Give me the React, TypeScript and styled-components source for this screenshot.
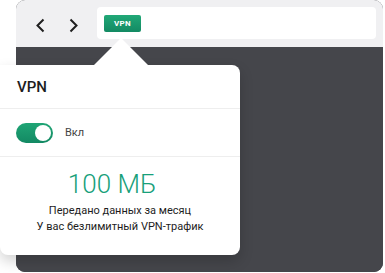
import styled, { createGlobalStyle } from "styled-components";

const GlobalStyle = createGlobalStyle`
  html, body {
    margin: 0;
    padding: 0;
    background: #ffffff;
    font-family: Roboto, "Liberation Sans", Arial, sans-serif;
  }
`;

export default function App() {
  return (
    <>
      <GlobalStyle />
      <Scene>
        <BrowserWindow>
          <Toolbar>
            <NavButton aria-label="back">
              <svg width="11" height="15" viewBox="0 0 11 15">
                <path d="M8.5 1.5 L2.5 7.5 L8.5 13.5" fill="none" stroke="#1f1f1f" strokeWidth="2" />
              </svg>
            </NavButton>
            <NavButton aria-label="forward">
              <svg width="11" height="15" viewBox="0 0 11 15">
                <path d="M2.5 1.5 L8.5 7.5 L2.5 13.5" fill="none" stroke="#1f1f1f" strokeWidth="2" />
              </svg>
            </NavButton>
            <AddressBar>
              <Badge>VPN</Badge>
            </AddressBar>
          </Toolbar>
          <Viewport />
        </BrowserWindow>

        <Popover>
          <Pointer />
          <Title>VPN</Title>
          <Divider />
          <SwitchRow>
            <Switch>
              <Knob />
            </Switch>
            <SwitchLabel>Вкл</SwitchLabel>
          </SwitchRow>
          <Divider />
          <Stats>
            <Amount>100 МБ</Amount>
            <Caption>Передано данных за месяц</Caption>
            <Caption>У вас безлимитный VPN-трафик</Caption>
          </Stats>
        </Popover>
      </Scene>
    </>
  );
}

const Scene = styled.div`
  position: relative;
  width: 385px;
  height: 273px;
  overflow: hidden;
`;

const BrowserWindow = styled.div`
  margin-left: 16px;
  width: 367px;
  height: 272px;
  border-radius: 9px;
  overflow: hidden;
  display: flex;
  flex-direction: column;
  background: #45464b;
`;

const Toolbar = styled.div`
  height: 47px;
  flex-shrink: 0;
  background: #f0f0f2;
  display: flex;
  align-items: center;
  padding: 0 7px 0 14px;
  box-sizing: border-box;
`;

const NavButton = styled.div`
  width: 20px;
  height: 20px;
  display: flex;
  align-items: center;
  justify-content: center;
  margin-right: 13px;
  margin-top: 3px;
`;

const AddressBar = styled.div`
  flex: 1;
  height: 32px;
  margin-left: 1px;
  margin-top: -1px;
  background: #ffffff;
  border-radius: 4px;
  display: flex;
  align-items: center;
  padding-left: 7px;
`;

const Badge = styled.div`
  width: 37px;
  height: 17px;
  border-radius: 2px;
  background: linear-gradient(180deg, #21a877 0%, #138a63 100%);
  color: #ffffff;
  font-size: 8px;
  font-weight: 700;
  letter-spacing: 0.3px;
  display: flex;
  align-items: center;
  justify-content: center;
`;

const Viewport = styled.div`
  flex: 1;
  background: #45464b;
`;

const Popover = styled.div`
  position: absolute;
  left: 0;
  top: 65px;
  width: 240px;
  height: 190px;
  background: #ffffff;
  border-radius: 0 8px 8px 8px;
  box-shadow: 0 6px 14px rgba(0, 0, 0, 0.18);
  display: flex;
  flex-direction: column;
`;

const Pointer = styled.div`
  position: absolute;
  top: -27px;
  left: 93px;
  width: 0;
  height: 0;
  border-left: 28px solid transparent;
  border-right: 28px solid transparent;
  border-bottom: 28px solid #ffffff;
`;

const Title = styled.div`
  height: 43px;
  display: flex;
  align-items: center;
  padding-left: 17px;
  font-size: 15px;
  font-weight: 500;
  color: #1d1d1d;
`;

const Divider = styled.div`
  height: 1px;
  background: #eeeeee;
`;

const SwitchRow = styled.div`
  height: 47px;
  display: flex;
  align-items: center;
  padding-left: 16px;
  gap: 12px;
`;

const Switch = styled.div`
  width: 37px;
  height: 20px;
  border-radius: 10px;
  background: linear-gradient(180deg, #1fa575 0%, #138963 100%);
  display: flex;
  align-items: center;
  justify-content: flex-end;
  padding: 0 2px;
  box-sizing: border-box;
`;

const Knob = styled.div`
  width: 16px;
  height: 16px;
  border-radius: 50%;
  background: #ffffff;
`;

const SwitchLabel = styled.div`
  font-size: 11px;
  color: #444444;
`;

const Stats = styled.div`
  display: flex;
  flex-direction: column;
  align-items: center;
  padding-top: 12px;
`;

const Amount = styled.div`
  font-size: 26px;
  font-weight: 300;
  color: #17a07a;
  line-height: 30px;
  margin-right: 16px;
  margin-bottom: 4px;
`;

const Caption = styled.div`
  font-size: 11px;
  line-height: 16px;
  color: #1d1d1d;
`;
